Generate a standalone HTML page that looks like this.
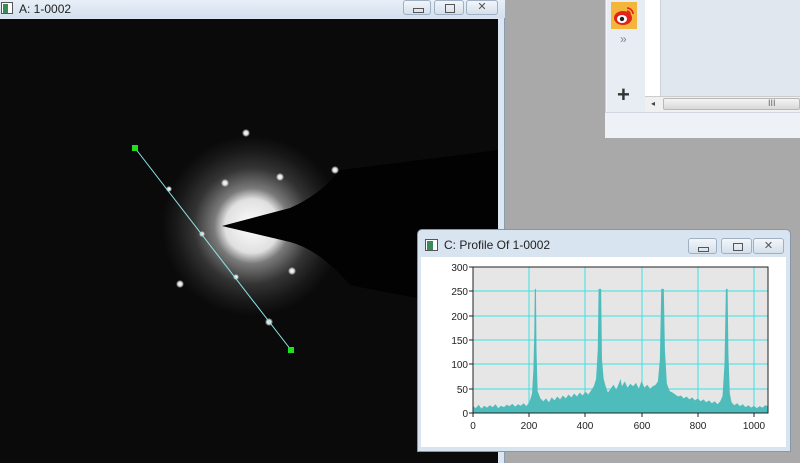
<!DOCTYPE html>
<html><head><meta charset="utf-8"><style>
html,body{margin:0;padding:0;width:800px;height:463px;overflow:hidden;background:#a9a9a9;font-family:"Liberation Sans","Noto Sans CJK SC",sans-serif}
.abs{position:absolute}
.btn{position:absolute;border:1px solid #9fb0c4;border-radius:3px;background:linear-gradient(#f2f6fb,#d5dfeb);box-sizing:border-box}
</style></head><body>
<div class="abs" style="left:605px;top:0;width:195px;height:137px;background:#f2f5f9;border-left:1px solid #c8d0da;box-sizing:border-box"></div>
<div class="abs" style="left:607px;top:0;width:38px;height:112px;background:#e8edf4"></div>
<div class="abs" style="left:611px;top:2px;width:26px;height:27px;background:#f4b63a"></div>
<svg class="abs" style="left:611px;top:2px" width="26" height="27"><ellipse cx="12" cy="16" rx="9" ry="7" fill="#e2231a"/><ellipse cx="11" cy="17" rx="5" ry="4" fill="#fff"/><circle cx="11" cy="17" r="2.2" fill="#222"/><path d="M16 6a6 6 0 0 1 6 6M16 9a3 3 0 0 1 3 3" stroke="#e2231a" stroke-width="1.6" fill="none"/></svg>
<div class="abs" style="left:620px;top:32px;font-size:12px;color:#7a8796">»</div>
<div class="abs" style="left:617px;top:84px;font-size:22px;font-weight:bold;color:#333;line-height:22px">+</div>
<div class="abs" style="left:645px;top:0;width:15px;height:96px;background:#fff"></div>
<div class="abs" style="left:660px;top:0;width:140px;height:96px;background:#e1e7ef;border-left:1px solid #c9d2dd"></div>
<div class="abs" style="left:645px;top:96px;width:155px;height:16px;background:#f0f0f0;border-top:1px solid #ccc"></div>
<div class="abs" style="left:663px;top:98px;width:137px;height:12px;background:linear-gradient(#f4f4f4,#d8d8d8);border:1px solid #b8b8b8;border-radius:2px;box-sizing:border-box"></div>
<div class="abs" style="left:651px;top:99px;font-size:8px;color:#444">◂</div>
<div class="abs" style="left:768px;top:98px;font-size:9px;color:#666">III</div>
<div class="abs" style="left:605px;top:112px;width:195px;height:25px;background:#eef2f7;border-top:1px solid #d0d7e0"></div>

<div class="abs" style="left:0;top:0;width:505px;height:463px;background:#dce6f2;border-right:1px solid #8a9bb0;box-sizing:border-box"></div>
<div class="abs" style="left:0;top:0;width:505px;height:18px;background:linear-gradient(#e8eff8,#d4e0ee)"></div>
<div class="abs" style="left:1px;top:2px;width:12px;height:12px;background:#fff;border:1px solid #555;box-sizing:border-box"><div style="width:5px;height:9px;background:#3a8a5a;margin:1px"></div></div>
<div class="abs" style="left:19px;top:2px;font-size:12px;color:#222">A: 1-0002</div>
<div class="btn" style="left:403px;top:0;width:28px;height:15px"><div style="position:absolute;left:9px;top:7px;width:9px;height:3px;border:1px solid #555"></div></div>
<div class="btn" style="left:434px;top:0;width:30px;height:15px"><div style="position:absolute;left:10px;top:3px;width:8px;height:7px;border:1px solid #555"></div></div>
<div class="btn" style="left:466px;top:0;width:32px;height:15px;text-align:center;font-size:11px;color:#555;line-height:13px">✕</div>

<svg class="abs" style="left:0;top:19px" width="498" height="444" viewBox="0 19 498 444">
<defs><radialGradient id="g" cx="252" cy="226" r="90" gradientUnits="userSpaceOnUse">
<stop offset="0" stop-color="#fff"/><stop offset="0.3" stop-color="#e0e0e0"/><stop offset="0.42" stop-color="#7a7a7a"/><stop offset="0.65" stop-color="#333"/><stop offset="0.85" stop-color="#181818"/><stop offset="1" stop-color="#0a0a0a"/></radialGradient>
<radialGradient id="s"><stop offset="0" stop-color="#fff"/><stop offset="0.5" stop-color="#ddd"/><stop offset="1" stop-color="#fff" stop-opacity="0"/></radialGradient></defs>
<rect x="0" y="19" width="498" height="444" fill="#0a0a0a"/>
<circle cx="252" cy="226" r="90" fill="url(#g)"/>
<path d="M222 226 L290 208 Q320 195 340 170 Q420 160 498 150 L498 310 Q420 300 350 285 Q320 250 290 242Z" fill="#020202"/>
<g fill="url(#s)">
<circle cx="246" cy="133" r="4"/><circle cx="225" cy="183" r="4"/><circle cx="280" cy="177" r="4"/><circle cx="335" cy="170" r="4"/><circle cx="292" cy="271" r="4"/><circle cx="180" cy="284" r="4"/><circle cx="169" cy="189" r="3"/><circle cx="202" cy="234" r="3"/><circle cx="236" cy="277" r="3"/><circle cx="269" cy="322" r="4"/></g>
<line x1="135" y1="148" x2="291" y2="350" stroke="#8ee6e6" stroke-width="1"/>
<rect x="132" y="145" width="6" height="6" fill="#1ee01e"/><rect x="288" y="347" width="6" height="6" fill="#1ee01e"/>
</svg>

<div class="abs" style="left:417px;top:229px;width:374px;height:223px;background:#d9e4f1;border:1px solid #8797ab;border-radius:5px 5px 0 0;box-sizing:border-box"></div>
<div class="abs" style="left:425px;top:239px;width:13px;height:12px;background:#fff;border:1px solid #555;box-sizing:border-box"><div style="width:6px;height:9px;background:#3a8a5a;margin:1px"></div></div>
<div class="abs" style="left:444px;top:238px;font-size:12px;color:#222">C: Profile Of 1-0002</div>
<div class="btn" style="left:688px;top:238px;width:29px;height:16px"><div style="position:absolute;left:9px;top:8px;width:9px;height:3px;border:1px solid #555"></div></div>
<div class="btn" style="left:721px;top:238px;width:31px;height:16px"><div style="position:absolute;left:11px;top:4px;width:8px;height:6px;border:1px solid #555"></div></div>
<div class="btn" style="left:753px;top:238px;width:31px;height:16px;text-align:center;font-size:11px;color:#555;line-height:14px">✕</div>
<div class="abs" style="left:421px;top:257px;width:365px;height:190px;background:#fff"></div>
<svg class="abs" style="left:421px;top:257px" width="365" height="190" viewBox="421 257 365 190" font-family="Liberation Sans,sans-serif" font-size="10" fill="#222">
<rect x="473" y="267" width="295" height="146" fill="#e6e6e6"/>
<g stroke="#3fe0e0" stroke-width="1">
<line x1="529" y1="267" x2="529" y2="413"/><line x1="585" y1="267" x2="585" y2="413"/><line x1="642" y1="267" x2="642" y2="413"/><line x1="698" y1="267" x2="698" y2="413"/><line x1="754" y1="267" x2="754" y2="413"/>
<line x1="473" y1="291" x2="768" y2="291"/><line x1="473" y1="316" x2="768" y2="316"/><line x1="473" y1="340" x2="768" y2="340"/><line x1="473" y1="364" x2="768" y2="364"/><line x1="473" y1="389" x2="768" y2="389"/></g>
<g transform="translate(473,413) scale(0.281,-0.487)">
<polygon fill="#4fbcbc" points="0,0 0,14 10,10 20,17 30,9 40,15 50,11 60,16 70,12 80,18 90,10 100,15 110,12 120,17 130,14 140,19 150,13 160,18 170,15 180,20 190,14 200,22 205,30 210,40 215,90 218,160 220,255 224,255 226,130 230,45 240,30 250,24 260,30 270,22 280,32 290,26 300,34 310,28 320,36 330,30 340,38 350,32 360,40 370,34 380,42 390,36 400,44 410,38 420,46 430,55 438,70 444,130 447,255 456,255 459,110 465,70 472,55 480,42 490,50 500,58 510,48 520,62 525,70 530,55 540,65 550,52 560,60 570,55 580,62 590,50 600,66 610,52 620,58 630,50 640,55 650,58 658,65 665,110 670,255 679,255 683,130 690,60 700,45 710,42 720,38 730,34 740,36 750,30 760,34 770,28 780,32 790,26 800,30 810,24 820,28 830,22 840,26 850,20 860,24 870,18 880,24 888,35 895,100 900,255 906,255 909,120 914,40 920,22 930,16 940,20 950,14 960,18 970,12 980,16 990,11 1000,15 1010,10 1020,14 1030,11 1040,16 1050,14 1050,0"/></g>
<rect x="473" y="267" width="295" height="146" fill="none" stroke="#222" stroke-width="1"/>
<g stroke="#222"><line x1="469" y1="267" x2="473" y2="267"/><line x1="469" y1="291" x2="473" y2="291"/><line x1="469" y1="316" x2="473" y2="316"/><line x1="469" y1="340" x2="473" y2="340"/><line x1="469" y1="364" x2="473" y2="364"/><line x1="469" y1="389" x2="473" y2="389"/><line x1="469" y1="413" x2="473" y2="413"/>
<line x1="473" y1="413" x2="473" y2="417"/><line x1="529" y1="413" x2="529" y2="417"/><line x1="585" y1="413" x2="585" y2="417"/><line x1="642" y1="413" x2="642" y2="417"/><line x1="698" y1="413" x2="698" y2="417"/><line x1="754" y1="413" x2="754" y2="417"/></g>
<g text-anchor="end"><text x="468" y="271">300</text><text x="468" y="295">250</text><text x="468" y="320">200</text><text x="468" y="344">150</text><text x="468" y="368">100</text><text x="468" y="393">50</text><text x="468" y="417">0</text></g>
<g text-anchor="middle"><text x="473" y="429">0</text><text x="529" y="429">200</text><text x="585" y="429">400</text><text x="642" y="429">600</text><text x="698" y="429">800</text><text x="754" y="429">1000</text></g>
</svg>
</body></html>
